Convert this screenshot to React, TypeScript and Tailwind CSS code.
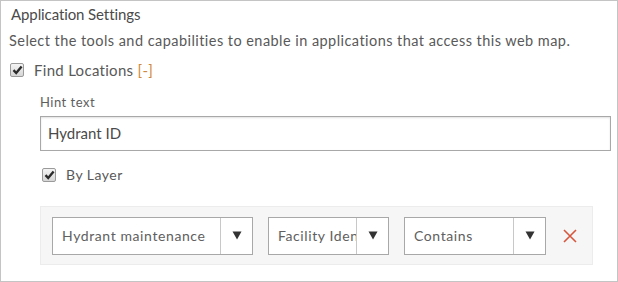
import React from "react";

function Check({ className = "" }: { className?: string }) {
  return (
    <span
      className={`inline-flex h-[14px] w-[14px] shrink-0 items-center justify-center rounded-[2px] border border-[#9a9a9a] bg-gradient-to-b from-[#f4f4f4] to-[#d6d6d6] ${className}`}
    >
      <svg width="11" height="10" viewBox="0 0 11 10">
        <path d="M1.5 5.2 L4.2 8 L9.6 1.6" fill="none" stroke="#2b2b2b" strokeWidth="2.4" strokeLinejoin="miter" />
      </svg>
    </span>
  );
}

function Select({ label, width }: { label: string; width: string }) {
  return (
    <div className={`flex h-[38px] ${width} shrink-0 border border-[#a8a8a8] bg-white`}>
      <div className="flex min-w-0 flex-1 items-center overflow-hidden whitespace-nowrap pl-[9px] text-[14px] tracking-[0.6px] text-[#606060]">
        {label}
      </div>
      <div className="flex w-[32px] shrink-0 items-center justify-center border-l border-[#c8c8c8]">
        <svg width="10" height="9" viewBox="0 0 10 9">
          <path d="M0.5 0.5 H9.5 L5 8.5 Z" fill="#333" />
        </svg>
      </div>
    </div>
  );
}

export default function App() {
  return (
    <div className="h-[282px] w-[618px] border border-[#c4c4c4] bg-white font-['Lato','Liberation_Sans',sans-serif] text-[#4c4c4c]">
      <div className="ml-[10px] mt-[3px] text-[15px] leading-[20px] tracking-[-0.1px] text-[#4a4a4a]">Application Settings</div>

      <div className="ml-[8px] mt-[7px] text-[14.5px] leading-[20px] tracking-[0.45px] text-[#595959]">
        Select the tools and capabilities to enable in applications that access this web map.
      </div>

      <div className="ml-[9px] mt-[9px] flex items-center gap-[10px] text-[15px] leading-[20px] tracking-[0.3px] text-[#595959]">
        <Check />
        <span>
          Find Locations <span className="text-[#d0883a]">[-]</span>
        </span>
      </div>

      <div className="ml-[39px] mr-[6px]">
        <div className="mt-[13px] text-[13px] leading-[18px] tracking-[0.5px] text-[#5e5e5e]">Hint text</div>

        <div className="mt-[5px] flex h-[35px] items-center border border-[#a8a8a8] bg-white pl-[7px] text-[15px] text-[#4a4a4a] shadow-[inset_0_1px_2px_rgba(0,0,0,0.12)]">
          Hydrant ID
        </div>

        <div className="ml-[2px] mt-[14px] flex items-center gap-[10px] text-[14px] leading-[20px] tracking-[0.5px] text-[#595959]">
          <Check />
          <span>By Layer</span>
        </div>
      </div>

      <div className="ml-[39px] mt-[21px] flex h-[59px] w-[553px] items-center border border-[#ececec] bg-[#f6f6f6] pl-[11px]">
        <div className="flex items-center gap-[15px]">
          <Select label="Hydrant maintenance" width="w-[201px]" />
          <Select label="Facility Identifier" width="w-[121px]" />
          <Select label="Contains" width="w-[142px]" />
        </div>
        <svg className="ml-[17px]" width="14" height="14" viewBox="0 0 14 14">
          <path d="M1 1 L13 13 M13 1 L1 13" stroke="#d6573d" strokeWidth="1.6" />
        </svg>
      </div>
    </div>
  );
}
